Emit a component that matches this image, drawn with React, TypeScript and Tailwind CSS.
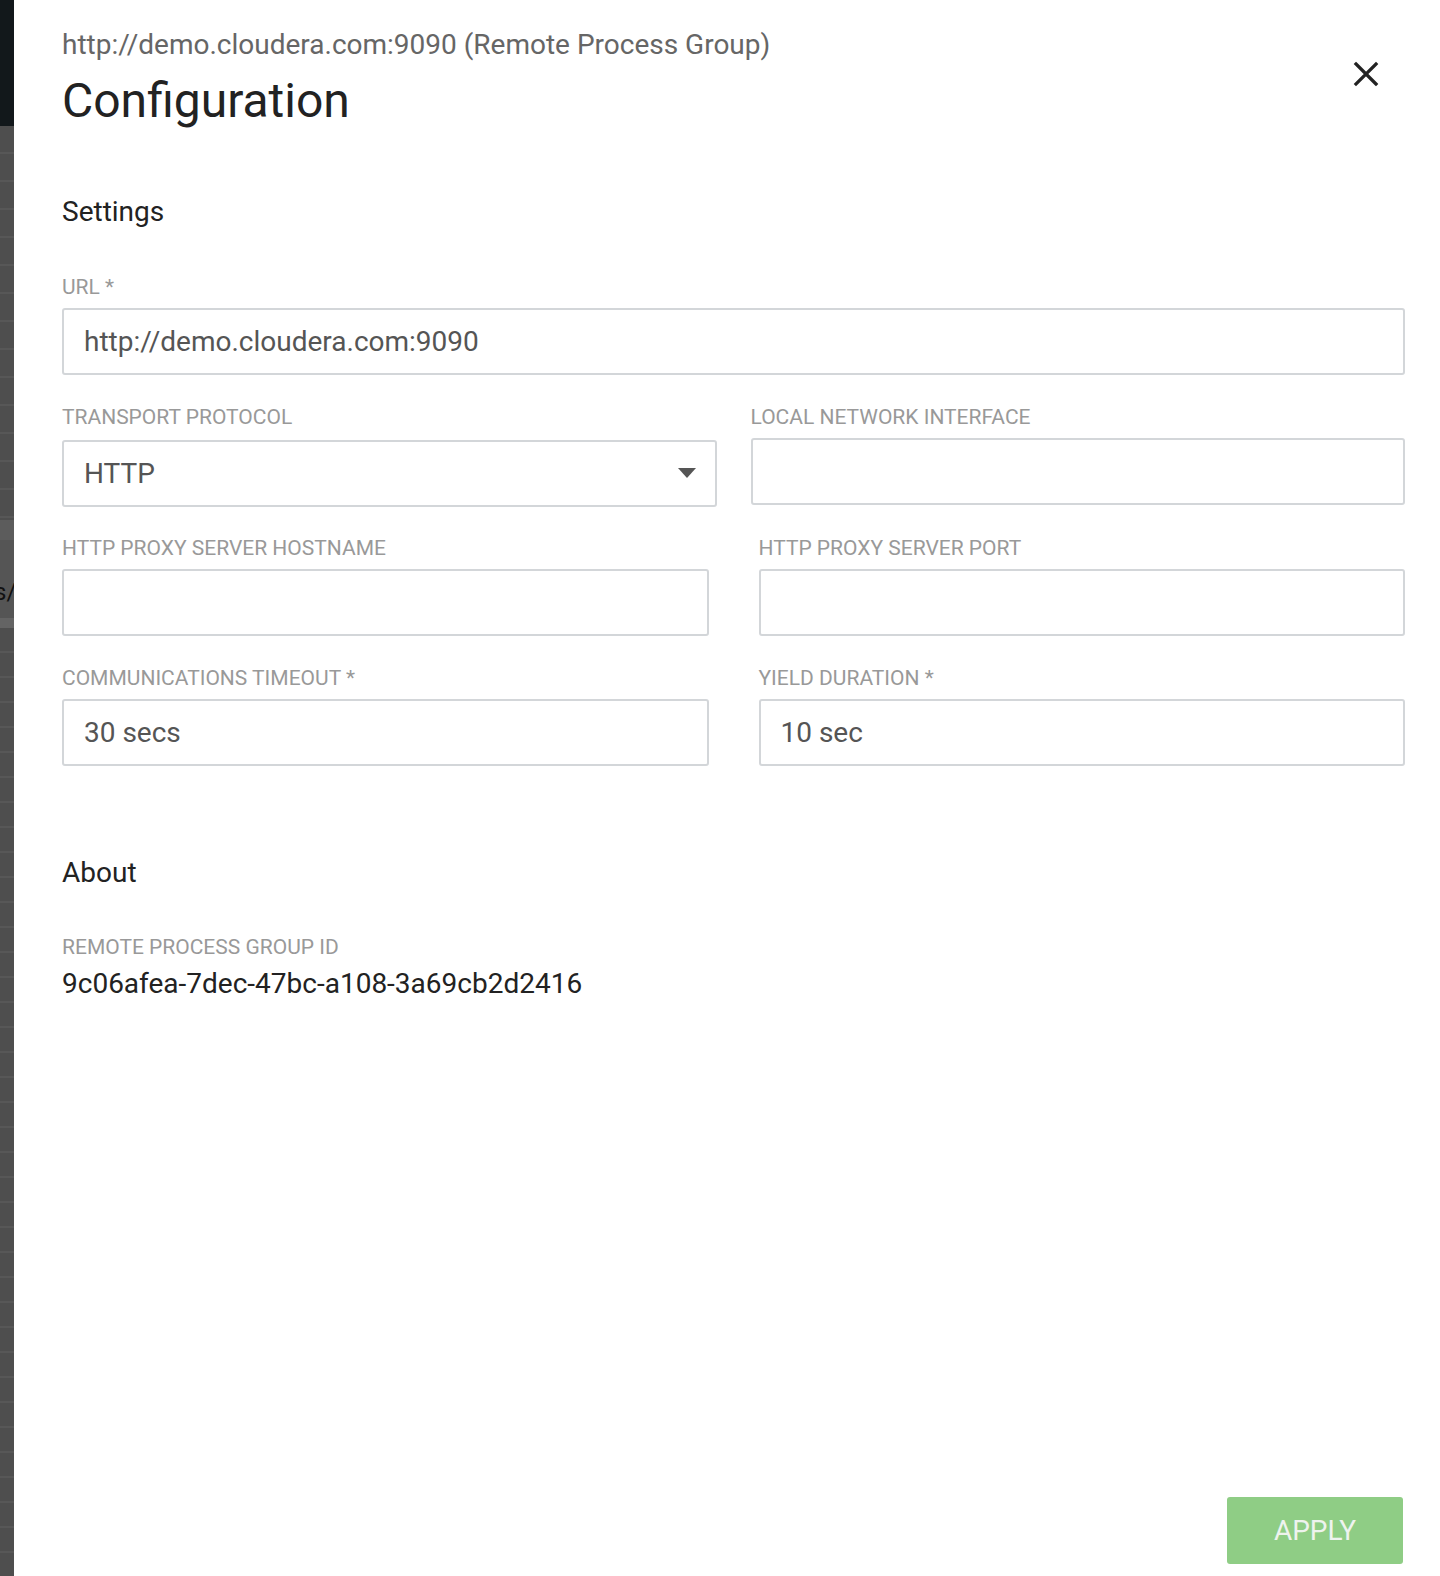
import { ChangeEvent, useState } from "react";

type Field = {
  label: string;
  value: string;
};

const Label = ({ text }: { text: string }) => (
  <div className="pt-[2px] text-[21px] leading-[24px] text-[#999999] uppercase">{text}</div>
);

const TextField = ({ field, onChange }: { field: Field; onChange: (v: string) => void }) => (
  <div className="flex flex-col gap-[9px]">
    <Label text={field.label} />
    <input
      value={field.value}
      onChange={(e: ChangeEvent<HTMLInputElement>) => onChange(e.target.value)}
      className="h-[67px] w-full rounded-[3px] border-2 border-[#d3d6d9] bg-white px-[20px] text-[28px] text-[#555555] outline-none"
    />
  </div>
);

const BackgroundStrip = () => (
  <div className="w-[14px] shrink-0 flex flex-col overflow-hidden">
    <div className="h-[126px] bg-[#12181b]" />
    <div className="h-[394px] bg-[#4e4e4e] bg-[repeating-linear-gradient(to_bottom,#4e4e4e_0px,#4e4e4e_26px,#575757_26px,#575757_28px)]" />
    <div className="h-[20px] bg-[#5c5c5c]" />
    <div className="h-[78px] bg-[#555555] flex items-end pb-[14px]">
      <span className="text-[24px] leading-none text-[#111] -ml-[6px]">s/</span>
    </div>
    <div className="h-[10px] bg-[#646464]" />
    <div className="flex-1 bg-[#4e4e4e] bg-[repeating-linear-gradient(to_bottom,#4e4e4e_0px,#4e4e4e_23px,#575757_23px,#575757_25px)]" />
  </div>
);

const App = () => {
  const [url, setUrl] = useState("http://demo.cloudera.com:9090");
  const [iface, setIface] = useState("");
  const [host, setHost] = useState("");
  const [port, setPort] = useState("");
  const [timeout, setTimeoutValue] = useState("30 secs");
  const [yieldDuration, setYieldDuration] = useState("10 sec");

  return (
    <div className="flex h-[1576px] w-full bg-white font-['Roboto','Liberation_Sans',sans-serif]">
      <BackgroundStrip />

      <div className="flex flex-1 flex-col pl-[48px] pr-[35px] pt-[29px] pb-[12px]">
        {/* header */}
        <div className="flex justify-between">
          <div>
            <div className="text-[28px] leading-[32px] text-[#666666]">
              http://demo.cloudera.com:9090 (Remote Process Group)
            </div>
            <h1 className="mt-[12px] text-[48px] leading-[56px] text-[#222222]">Configuration</h1>
          </div>
          <button className="mt-[30px] mr-[24px] h-[30px] w-[30px] text-[#222]">
            <svg viewBox="0 0 24 24" className="h-[30px] w-[30px]" fill="none" stroke="currentColor" strokeWidth="2.6" strokeLinecap="square">
              <path d="M4 4L20 20M20 4L4 20" />
            </svg>
          </button>
        </div>

        {/* settings */}
        <h2 className="mt-[67px] text-[28px] leading-[32px] text-[#222222]">Settings</h2>

        <div className="mt-[45px]">
          <TextField field={{ label: "URL *", value: url }} onChange={setUrl} />
        </div>

        <div className="mt-[28px] grid grid-cols-2 gap-x-[34px]">
          <div className="flex flex-col gap-[11px]">
            <Label text="Transport Protocol" />
            <div className="relative">
              <select className="h-[67px] w-full appearance-none rounded-[3px] border-2 border-[#d3d6d9] bg-white px-[20px] text-[28px] text-[#555555] outline-none">
                <option>HTTP</option>
                <option>RAW</option>
              </select>
              <svg viewBox="0 0 18 10" className="pointer-events-none absolute right-[21px] top-[28px] h-[10px] w-[18px]">
                <path d="M0 0H18L9 10Z" fill="#555555" />
              </svg>
            </div>
          </div>
          <TextField field={{ label: "Local Network Interface", value: iface }} onChange={setIface} />
        </div>

        <div className="mt-[27px] grid grid-cols-2 gap-x-[50px]">
          <TextField field={{ label: "HTTP Proxy Server Hostname", value: host }} onChange={setHost} />
          <TextField field={{ label: "HTTP Proxy Server Port", value: port }} onChange={setPort} />
        </div>

        <div className="mt-[28px] grid grid-cols-2 gap-x-[50px]">
          <TextField field={{ label: "Communications Timeout *", value: timeout }} onChange={setTimeoutValue} />
          <TextField field={{ label: "Yield Duration *", value: yieldDuration }} onChange={setYieldDuration} />
        </div>

        {/* about */}
        <h2 className="mt-[91px] text-[28px] leading-[32px] text-[#222222]">About</h2>
        <div className="mt-[44px]">
          <Label text="Remote Process Group ID" />
          <div className="mt-[9px] text-[28px] leading-[32px] text-[#222222]">
            9c06afea-7dec-47bc-a108-3a69cb2d2416
          </div>
        </div>

        <div className="mt-auto flex justify-end pr-[2px]">
          <button className="h-[67px] w-[176px] rounded-[3px] bg-[#8fcd85] text-[28px] text-[#eef3ee]">
            APPLY
          </button>
        </div>
      </div>
    </div>
  );
};

export default App;
